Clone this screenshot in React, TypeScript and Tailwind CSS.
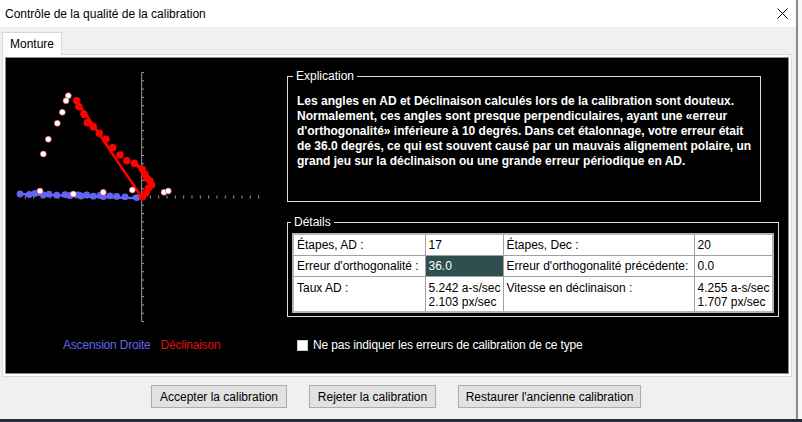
const red: [number, number][] = [
  [76.7, 100.7], [79, 106.7], [84, 114.3], [87.3, 122.7], [93.3, 126.7], [99.3, 133.3],
  [106, 139.3], [112.7, 147.7], [120, 155], [126.7, 160.7], [134.3, 163.3], [142.3, 169.3],
  [145, 174.3], [146.7, 178.3], [150, 181], [151.7, 185], [148.3, 188.3], [146, 192.7], [142.7, 196.7],
];

const white: [number, number][] = [
  [68.3, 95.7], [66, 100.7], [62.3, 112.3], [57.3, 123.3], [48.3, 139.3], [43.3, 154],
  [40, 191], [73.3, 194], [103.3, 192.3], [132.3, 190], [164, 192.3], [168.3, 191],
];

const blueX = [20, 29.3, 35, 43.3, 49, 56.7, 65, 70, 78.3, 81, 86.7, 93.3, 100, 103.3, 110, 116.7, 125, 136.7];
const blueJitter = [0, 0.5, -0.5, 1, 0.2, 1.2, 0.6, 1.5, 0.8, 2, 1, 2.2, 1.4, 2.6, 1.8, 2.4, 2.8, 3.6];

const ticks = Array.from({ length: 31 }, (_, i) => 197 + (i - 15) * 8.3);
const hTicks = Array.from({ length: 29 }, (_, i) => 142 + (i - 14) * 8.33);

function Chart() {
  return (
    <svg width="281" height="279" viewBox="0 0 281 279">
      <g transform="translate(-6 -58)">
        {/* axes */}
        <line x1="141.7" y1="72.7" x2="141.7" y2="321.7" stroke="#9a9a9a" strokeWidth="1" />
        {ticks.map((y) => (
          <line key={y} x1="141.7" y1={y} x2="144" y2={y} stroke="#9a9a9a" strokeWidth="1" />
        ))}
        {hTicks.map((x) => (
          <line key={x} x1={x} y1="195.5" x2={x} y2="198.5" stroke="#9a9a9a" strokeWidth="1" />
        ))}
        {/* RA */}
        <line x1="20" y1="194" x2="138.3" y2="198.3" stroke="#6464f4" strokeWidth="2.5" />
        {blueX.map((x, i) => (
          <circle key={x} cx={x} cy={194 + blueJitter[i]} r="3.4" fill="#6464f4" />
        ))}
        {/* Dec */}
        <line x1="76.7" y1="100.7" x2="141.7" y2="197.3" stroke="#ff0000" strokeWidth="2.5" />
        <polyline
          points={red.slice(10).map((p) => p.join(",")).join(" ")}
          fill="none"
          stroke="#ff0000"
          strokeWidth="3.5"
        />
        {red.map(([x, y]) => (
          <circle key={`${x}-${y}`} cx={x} cy={y} r="3.7" fill="#ff0000" />
        ))}
        {white.map(([x, y]) => (
          <circle key={`${x}-${y}`} cx={x} cy={y} r="3" fill="#ffffff" stroke="#e04040" strokeWidth="0.6" />
        ))}
      </g>
    </svg>
  );
}

function Button({ label, w }: { label: string; w: string }) {
  return (
    <button className={`${w} h-[23px] bg-[#e1e1e1] border border-[#adadad] text-[12px] text-black`}>{label}</button>
  );
}

export default function App() {
  const cell = "border border-[#a0a0a0] px-[3px] align-middle";
  const tall = "border border-[#a0a0a0] px-[3px] align-top pt-[4px] leading-[14px]";
  return (
    <div className="w-[802px] h-[422px] overflow-hidden flex flex-col font-['Liberation_Sans',Arial,sans-serif] text-[12px] leading-[16px]">
      <div className="flex flex-1 min-h-0">
        <div className="w-[796px] flex flex-col bg-[#f0f0f0]">
          {/* Title bar */}
          <div className="h-[27px] bg-white flex items-center justify-between pl-[5px] pr-[8px] shrink-0">
            <span className="text-black">Contrôle de la qualité de la calibration</span>
            <svg width="11" height="11" viewBox="0 0 11 11">
              <path d="M0.5 0.5 L10.5 10.5 M10.5 0.5 L0.5 10.5" stroke="#000" strokeWidth="1" />
            </svg>
          </div>

          {/* Tabs */}
          <div className="pt-[5px] pl-[2px] flex shrink-0">
            <div className="relative z-10 -mb-px w-[60px] h-[23px] bg-white border border-b-0 border-[#d9d9d9] flex items-center justify-center text-black">
              Monture
            </div>
          </div>

          <div className="ml-[2px] w-[790px] h-[323px] border border-[#d9d9d9] bg-white p-[2px] shrink-0">
            <div className="h-full border border-[#8c8c8c] bg-black flex">
              {/* Left: chart */}
              <div className="w-[281px] flex flex-col">
                <Chart />
                <div className="flex pl-[57px] gap-[10px]">
                  <span className="text-[#6464f0] tracking-[-0.2px]">Ascension Droite</span>
                  <span className="text-[#e01010] tracking-[-0.2px]">Déclinaison</span>
                </div>
              </div>

              {/* Right */}
              <div className="flex flex-col pt-[10px]">
                <fieldset className="w-[471px] h-[134px] border border-[#dcdcdc] px-[9px] pt-[10px]">
                  <legend className="-ml-[4px] px-[3px] text-white">Explication</legend>
                  <p className="text-white font-bold leading-[15px] whitespace-nowrap">
                    Les angles en AD et Déclinaison calculés lors de la calibration sont douteux.
                    <br />
                    Normalement, ces angles sont presque perpendiculaires, ayant une «erreur
                    <br />
                    d'orthogonalité» inférieure à 10 degrés. Dans cet étalonnage, votre erreur était
                    <br />
                    de 36.0 degrés, ce qui est souvent causé par un mauvais alignement polaire, un
                    <br />
                    grand jeu sur la déclinaison ou une grande erreur périodique en AD.
                  </p>
                </fieldset>

                <fieldset className="mt-[12px] w-[491px] h-[103px] border border-[#dcdcdc] px-[4px] pt-[3px]">
                  <legend className="-ml-[1px] px-[3px] text-white">Détails</legend>
                  <table className="w-[480px] border-collapse bg-white text-black table-fixed border-2 border-[#b4b4b4]">
                    <colgroup>
                      <col className="w-[132px]" />
                      <col className="w-[78px]" />
                      <col className="w-[191px]" />
                      <col className="w-[79px]" />
                    </colgroup>
                    <tbody>
                      <tr className="h-[21px]">
                        <td className={cell}>Étapes, AD :</td>
                        <td className={cell}>17</td>
                        <td className={cell}>Étapes, Dec :</td>
                        <td className={cell}>20</td>
                      </tr>
                      <tr className="h-[21px]">
                        <td className={cell}>Erreur d'orthogonalité :</td>
                        <td className={`${cell} bg-[#2f4f4f] text-white`}>36.0</td>
                        <td className={cell}>Erreur d'orthogonalité précédente:</td>
                        <td className={cell}>0.0</td>
                      </tr>
                      <tr className="h-[36px]">
                        <td className={tall}>Taux AD :</td>
                        <td className={`${tall} whitespace-nowrap`}>
                          5.242 a-s/sec
                          <br />
                          2.103 px/sec
                        </td>
                        <td className={tall}>Vitesse en déclinaison :</td>
                        <td className={`${tall} whitespace-nowrap`}>
                          4.255 a-s/sec
                          <br />
                          1.707 px/sec
                        </td>
                      </tr>
                    </tbody>
                  </table>
                </fieldset>

                <label className="mt-[20px] ml-[10px] flex items-center gap-[5px] text-white tracking-[-0.15px]">
                  <span className="w-[11px] h-[11px] bg-white border border-[#cfcfcf]" />
                  Ne pas indiquer les erreurs de calibration de ce type
                </label>
              </div>
            </div>
          </div>

          {/* Buttons */}
          <div className="mt-[8px] flex justify-center gap-[22px] pr-[4px]">
            <Button label="Accepter la calibration" w="w-[136px]" />
            <Button label="Rejeter la calibration" w="w-[127px]" />
            <Button label="Restaurer l'ancienne calibration" w="w-[183px]" />
          </div>
        </div>
        <div className="flex-1 bg-[#f7f7f7] border-l-2 border-[#8a8a8a]" />
      </div>
      <div className="h-[3px] bg-[#1f2d3d] shrink-0" />
    </div>
  );
}
